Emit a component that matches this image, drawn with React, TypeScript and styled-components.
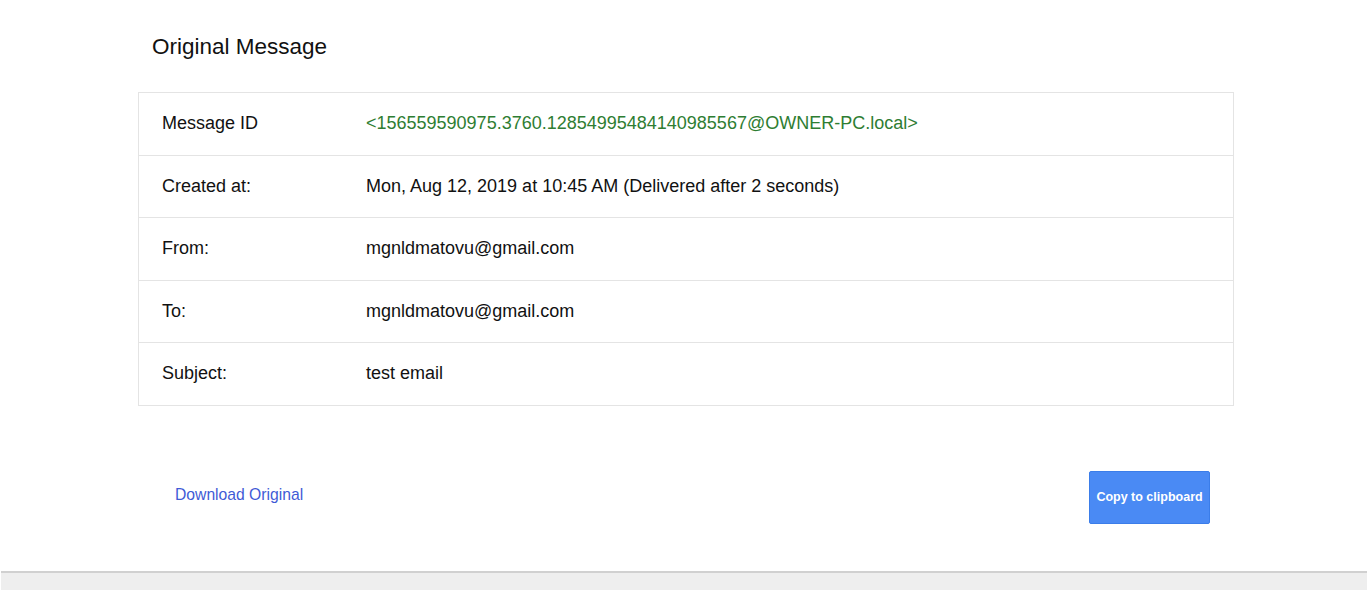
import React from "react";
import styled, { createGlobalStyle } from "styled-components";

const Global = createGlobalStyle`
  html, body { margin: 0; padding: 0; background: #fff; }
  body { font-family: "Liberation Sans", Arial, sans-serif; color: #111; }
`;

const Page = styled.div`
  width: 1367px;
  height: 590px;
  display: flex;
  flex-direction: column;
  overflow: hidden;
`;

const Main = styled.main`
  flex: 1;
  padding: 0 133px 0 138px;
  display: flex;
  flex-direction: column;
`;

const Title = styled.h1`
  margin: 31px 0 0 14px;
  height: 31px;
  font-size: 22.5px;
  font-weight: 400;
  line-height: 31px;
  color: #111;
`;

const Table = styled.div`
  margin-top: 30px;
  border: 1.5px solid #e4e4e4;
  display: flex;
  flex-direction: column;
`;

const Row = styled.div`
  display: grid;
  grid-template-columns: 204px 1fr;
  align-items: center;
  height: 61.5px;
  padding-left: 23px;
  font-size: 18px;
  & + & {
    border-top: 1.5px solid #e4e4e4;
  }
`;

const Label = styled.div`
  color: #111;
`;

const Value = styled.div<{ $accent?: boolean }>`
  color: ${(p) => (p.$accent ? "#2e7d32" : "#111")};
`;

const Actions = styled.div`
  margin-top: 65px;
  display: flex;
  justify-content: space-between;
  align-items: center;
  padding: 0 24px 0 37px;
`;

const Link = styled.a`
  font-size: 15.7px;
  color: #3f5bd6;
  text-decoration: none;
  margin-top: -5px;
  cursor: pointer;
`;

const Button = styled.button`
  width: 121px;
  height: 53px;
  border: 1px solid #3b7de9;
  border-radius: 2px;
  background: #4a8af4;
  color: #fff;
  font-family: "Liberation Sans", Arial, sans-serif;
  font-size: 12.5px;
  font-weight: 700;
  padding: 0;
  cursor: pointer;
`;

const Footer = styled.footer`
  height: 17px;
  margin-left: 1px;
  border-top: 2px solid #d0d0d0;
  background: #eeeeee;
`;

const rows = [
  { label: "Message ID", value: "<156559590975.3760.12854995484140985567@OWNER-PC.local>", accent: true },
  { label: "Created at:", value: "Mon, Aug 12, 2019 at 10:45 AM (Delivered after 2 seconds)" },
  { label: "From:", value: "mgnldmatovu@gmail.com" },
  { label: "To:", value: "mgnldmatovu@gmail.com" },
  { label: "Subject:", value: "test email" },
];

export default function App() {
  return (
    <Page>
      <Global />
      <Main>
        <Title>Original Message</Title>
        <Table>
          {rows.map((r) => (
            <Row key={r.label}>
              <Label>{r.label}</Label>
              <Value $accent={r.accent}>{r.value}</Value>
            </Row>
          ))}
        </Table>
        <Actions>
          <Link>Download Original</Link>
          <Button>Copy to clipboard</Button>
        </Actions>
      </Main>
      <Footer />
    </Page>
  );
}
